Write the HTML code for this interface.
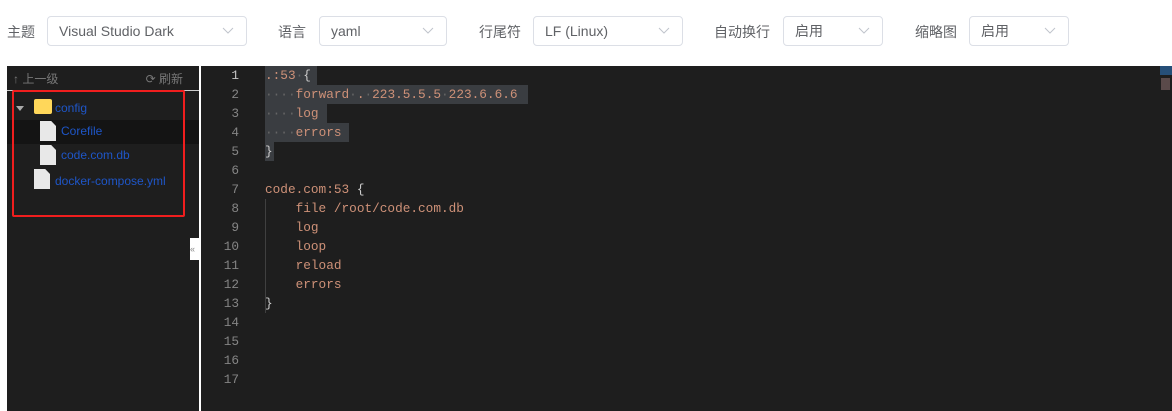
<!DOCTYPE html><html><head><meta charset="utf-8"><style>
body{margin:0;width:1172px;height:411px;background:#fff;position:relative;overflow:hidden;font-family:"Liberation Sans","Noto Sans CJK SC",sans-serif;}
.lbl{position:absolute;top:22px;font-size:14px;color:#606266}
.sel{position:absolute;top:16px;height:30px;border:1px solid #dcdfe6;border-radius:4px;box-sizing:border-box;font-size:14px;color:#606266;padding-left:11px;line-height:29px}
.sel svg{position:absolute;right:12px;top:10px}
#side{position:absolute;left:7px;top:66px;width:192px;height:345px;background:#1e1e1e}
#ed{position:absolute;left:201px;top:66px;width:971px;height:345px;background:#1e1e1e;font-family:"Liberation Mono",monospace;font-size:12.75px}
.ln{position:absolute;left:0;width:38px;text-align:right;color:#858585;height:19px;line-height:19px}
.cd{position:absolute;left:64px;height:19px;line-height:19px;color:#ce9178;white-space:pre}
.hl{position:absolute;background:#3a3d41;height:19px}
.f{position:absolute;font-size:12px;color:#1e56c8}
.doc{position:absolute;width:16px;height:20px;background:#e8e8e8;clip-path:polygon(0 0,70% 0,100% 25%,100% 100%,0 100%)}
</style></head><body>
<div class="lbl" style="left:7px">主题</div>
<div class="sel" style="left:47px;width:200px">Visual Studio Dark<svg width="12" height="8"><path d="M1 1l5 5 5-5" stroke="#c0c4cc" fill="none"/></svg></div>
<div class="lbl" style="left:278px">语言</div>
<div class="sel" style="left:319px;width:128px">yaml<svg width="12" height="8"><path d="M1 1l5 5 5-5" stroke="#c0c4cc" fill="none"/></svg></div>
<div class="lbl" style="left:479px">行尾符</div>
<div class="sel" style="left:533px;width:150px">LF (Linux)<svg width="12" height="8"><path d="M1 1l5 5 5-5" stroke="#c0c4cc" fill="none"/></svg></div>
<div class="lbl" style="left:714px">自动换行</div>
<div class="sel" style="left:783px;width:100px">启用<svg width="12" height="8"><path d="M1 1l5 5 5-5" stroke="#c0c4cc" fill="none"/></svg></div>
<div class="lbl" style="left:915px">缩略图</div>
<div class="sel" style="left:969px;width:100px">启用<svg width="12" height="8"><path d="M1 1l5 5 5-5" stroke="#c0c4cc" fill="none"/></svg></div>

<div id="side">
<div style="position:absolute;left:6px;top:4px;font-size:12px;color:#777">↑ 上一级</div>
<div style="position:absolute;right:16px;top:4px;font-size:12px;color:#777">⟳ 刷新</div>
<div style="position:absolute;left:0;top:24px;width:192px;height:1px;background:#ccc"></div>
<div style="position:absolute;left:0;top:54px;width:192px;height:24px;background:#141414"></div>
<div style="position:absolute;left:9px;top:40px;width:0;height:0;border-left:4px solid transparent;border-right:4px solid transparent;border-top:5px solid #aaa"></div>
<div style="position:absolute;left:27px;top:33px;width:18px;height:15px;background:#ffd75a;border-radius:2px"></div>
<div class="f" style="left:48px;top:35px">config</div>
<div class="doc" style="left:33px;top:55px"></div><div class="f" style="left:54px;top:58px">Corefile</div>
<div class="doc" style="left:33px;top:79px"></div><div class="f" style="left:54px;top:82px">code.com.db</div>
<div class="doc" style="left:27px;top:103px"></div><div class="f" style="left:48px;top:108px">docker-compose.yml</div>
<div style="position:absolute;left:5px;top:24px;width:169px;height:123px;border:2px solid #f01e1e;border-radius:2px"></div>
<div style="position:absolute;left:183px;top:172px;width:9px;height:22px;background:#fff;font-size:9px;color:#888;line-height:22px">«</div>
</div>
<div style="position:absolute;left:199px;top:66px;width:2px;height:345px;background:#fff"></div>

<div id="ed">
<div class="hl" style="left:64px;top:0;width:52px"></div>
<div class="hl" style="left:64px;top:19px;width:263px"></div>
<div class="hl" style="left:64px;top:38px;width:62px"></div>
<div class="hl" style="left:64px;top:57px;width:84px"></div>
<div class="hl" style="left:64px;top:76px;width:9px"></div>
<div style="position:absolute;left:64px;top:133px;width:1px;height:114px;background:#404040"></div>
<div class="ln" style="top:0;color:#c6c6c6">1</div><div class="ln" style="top:19px">2</div><div class="ln" style="top:38px">3</div><div class="ln" style="top:57px">4</div><div class="ln" style="top:76px">5</div><div class="ln" style="top:95px">6</div><div class="ln" style="top:114px">7</div><div class="ln" style="top:133px">8</div><div class="ln" style="top:152px">9</div><div class="ln" style="top:171px">10</div><div class="ln" style="top:190px">11</div><div class="ln" style="top:209px">12</div><div class="ln" style="top:228px">13</div><div class="ln" style="top:247px">14</div><div class="ln" style="top:266px">15</div><div class="ln" style="top:285px">16</div><div class="ln" style="top:304px">17</div>
<div class="cd" style="top:0">.:53<span style="color:#666">·</span><span style="color:#ccc">{</span></div>
<div class="cd" style="top:19px"><span style="color:#666">····</span>forward<span style="color:#666">·</span>.<span style="color:#666">·</span>223.5.5.5<span style="color:#666">·</span>223.6.6.6</div>
<div class="cd" style="top:38px"><span style="color:#666">····</span>log</div>
<div class="cd" style="top:57px"><span style="color:#666">····</span>errors</div>
<div class="cd" style="top:76px;color:#ccc">}</div>
<div class="cd" style="top:114px">code.com:53 <span style="color:#ccc">{</span></div>
<div class="cd" style="top:133px">    file /root/code.com.db</div>
<div class="cd" style="top:152px">    log</div>
<div class="cd" style="top:171px">    loop</div>
<div class="cd" style="top:190px">    reload</div>
<div class="cd" style="top:209px">    errors</div>
<div class="cd" style="top:228px;color:#ccc">}</div>
<div style="position:absolute;right:0;top:0;width:12px;height:9px;background:#264f78"></div>
<div style="position:absolute;right:2px;top:12px;width:9px;height:12px;background:#5a4a4a"></div>
</div>
</body></html>
